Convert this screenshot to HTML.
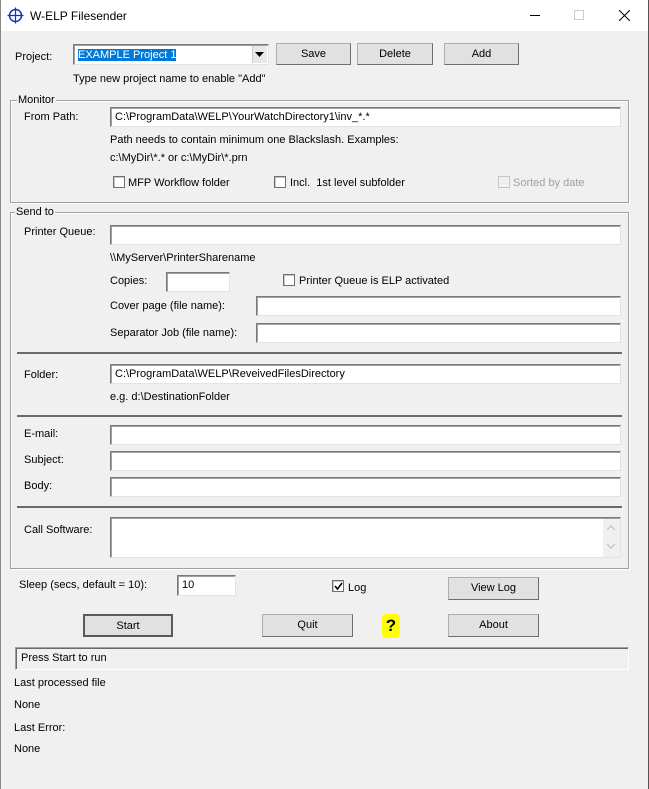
<!DOCTYPE html>
<html><head><meta charset="utf-8"><style>
*{box-sizing:border-box;margin:0;padding:0}
body{width:649px;height:789px;background:#f0f0f0;font-family:"Liberation Sans",sans-serif;font-size:11px;color:#000;position:relative;overflow:hidden}
.a{position:absolute;white-space:nowrap}
.t{position:absolute;white-space:nowrap;line-height:13px;margin-top:1px}
.in{position:absolute;background:#fff;border:1px solid #7a7a7a;border-right-color:#e3e3e3;border-bottom-color:#e3e3e3;box-shadow:inset 1px 1px 0 #a0a0a0;padding:3px 4px 2px;line-height:13px}
.btn{position:absolute;background:#e1e1e1;border:1px solid #adadad;border-right-color:#6e6e6e;border-bottom-color:#6e6e6e;text-align:center;line-height:21px}
.grp{position:absolute;border:1px solid #a0a0a0;box-shadow:1px 1px 0 #fff inset,1px 1px 0 #fff}
.gl{position:absolute;background:#f0f0f0;padding:0 1px;line-height:13px}
.cb{position:absolute;width:12px;height:12px;border:1px solid #6f6f6f;background:#fff;box-shadow:inset 1px 1px 0 #c8c8c8}
.hr{position:absolute;left:17px;width:605px;height:2px;background:#6a6a6a}
</style></head><body>
<div class="a" style="left:0;top:0;width:649px;height:31px;background:#fff"></div>
<div class="a" style="left:648px;top:0;width:1px;height:789px;background:#555"></div>
<div class="a" style="left:0;top:0;width:1px;height:789px;background:#888"></div>
<svg class="a" style="left:7px;top:7px" width="17" height="17" viewBox="0 0 17 17"><circle cx="8.5" cy="8.5" r="6" fill="none" stroke="#1a2ad8" stroke-width="1.5"/><path d="M8.5 0.5V16.5M0.5 8.5H16.5" stroke="#1a2ad8" stroke-width="1.2"/></svg>
<div class="t" style="left:30px;top:9px;font-size:12px">W-ELP Filesender</div>
<div class="a" style="left:530px;top:15px;width:10px;height:1px;background:#000"></div>
<div class="a" style="left:574px;top:10px;width:10px;height:10px;border:1px solid #ccc"></div>
<svg class="a" style="left:619px;top:10px" width="11" height="11"><path d="M0 0L11 11M11 0L0 11" stroke="#000" stroke-width="1"/></svg>

<div class="t" style="left:15px;top:50px">Project:</div>
<div class="in" style="left:73px;top:44px;width:196px;height:21px;padding:3px 4px"><span style="background:#0078d7;color:#fff;line-height:14px">EXAMPLE Project 1</span></div>
<div class="a" style="left:252px;top:46px;width:15px;height:17px;background:#e8e8e8;border-left:1px solid #ccc"></div>
<svg class="a" style="left:255px;top:52px" width="9" height="5"><path d="M0 0H9L4.5 5Z" fill="#000"/></svg>
<div class="btn" style="left:276px;top:43px;width:75px;height:22px">Save</div>
<div class="btn" style="left:357px;top:43px;width:76px;height:22px">Delete</div>
<div class="btn" style="left:444px;top:43px;width:75px;height:22px">Add</div>
<div class="t" style="left:73px;top:72px">Type new project name to enable "Add"</div>

<div class="grp" style="left:10px;top:100px;width:619px;height:103px"></div>
<div class="gl" style="left:17px;top:94px">Monitor</div>
<div class="t" style="left:24px;top:110px">From Path:</div>
<div class="in" style="left:110px;top:107px;width:511px;height:20px">C:\ProgramData\WELP\YourWatchDirectory1\inv_*.*</div>
<div class="t" style="left:110px;top:133px">Path needs to contain minimum one Blackslash. Examples:</div>
<div class="t" style="left:110px;top:151px">c:\MyDir\*.* or c:\MyDir\*.prn</div>
<div class="cb" style="left:113px;top:176px"></div>
<div class="t" style="left:128px;top:176px">MFP Workflow folder</div>
<div class="cb" style="left:274px;top:176px"></div>
<div class="t" style="left:290px;top:176px">Incl.&nbsp; 1st level subfolder</div>
<div class="cb" style="left:498px;top:176px;border-color:#c8c8c8;background:#f0f0f0;box-shadow:none"></div>
<div class="t" style="left:513px;top:176px;color:#a0a0a0">Sorted by date</div>

<div class="grp" style="left:10px;top:212px;width:619px;height:357px"></div>
<div class="gl" style="left:15px;top:206px">Send to</div>
<div class="t" style="left:24px;top:225px">Printer Queue:</div>
<div class="in" style="left:110px;top:225px;width:511px;height:20px"></div>
<div class="t" style="left:110px;top:251px">\\MyServer\PrinterSharename</div>
<div class="t" style="left:110px;top:274px">Copies:</div>
<div class="in" style="left:166px;top:272px;width:64px;height:20px"></div>
<div class="cb" style="left:283px;top:274px"></div>
<div class="t" style="left:299px;top:274px">Printer Queue is ELP activated</div>
<div class="t" style="left:110px;top:299px">Cover page (file name):</div>
<div class="in" style="left:256px;top:296px;width:365px;height:20px"></div>
<div class="t" style="left:110px;top:326px">Separator Job (file name):</div>
<div class="in" style="left:256px;top:323px;width:365px;height:20px"></div>
<div class="hr" style="top:352px"></div>
<div class="t" style="left:24px;top:368px">Folder:</div>
<div class="in" style="left:110px;top:364px;width:511px;height:20px">C:\ProgramData\WELP\ReveivedFilesDirectory</div>
<div class="t" style="left:110px;top:390px">e.g. d:\DestinationFolder</div>
<div class="hr" style="top:415px"></div>
<div class="t" style="left:24px;top:427px">E-mail:</div>
<div class="in" style="left:110px;top:425px;width:511px;height:20px"></div>
<div class="t" style="left:24px;top:453px">Subject:</div>
<div class="in" style="left:110px;top:451px;width:511px;height:20px"></div>
<div class="t" style="left:24px;top:479px">Body:</div>
<div class="in" style="left:110px;top:477px;width:511px;height:20px"></div>
<div class="hr" style="top:506px"></div>
<div class="t" style="left:24px;top:523px">Call Software:</div>
<div class="in" style="left:110px;top:517px;width:511px;height:41px"></div>
<div class="a" style="left:603px;top:519px;width:17px;height:38px;background:#f0f0f0"></div>
<svg class="a" style="left:606px;top:543px" width="10" height="6"><path d="M1 1L5 5L9 1" fill="none" stroke="#c0c0c0" stroke-width="1.2"/></svg>
<svg class="a" style="left:606px;top:525px" width="10" height="6"><path d="M1 5L5 1L9 5" fill="none" stroke="#c0c0c0" stroke-width="1.2"/></svg>

<div class="t" style="left:19px;top:578px">Sleep (secs, default = 10):</div>
<div class="in" style="left:177px;top:575px;width:59px;height:21px">10</div>
<div class="cb" style="left:332px;top:580px"></div>
<svg class="a" style="left:334px;top:582px" width="9" height="9"><path d="M1 4L3.5 7L8 1" fill="none" stroke="#000" stroke-width="1.6"/></svg>
<div class="t" style="left:348px;top:581px">Log</div>
<div class="btn" style="left:448px;top:577px;width:91px;height:23px">View Log</div>

<div class="btn" style="left:83px;top:614px;width:90px;height:23px;border:2px solid #5a5a5a;line-height:20px">Start</div>
<div class="btn" style="left:262px;top:614px;width:91px;height:23px">Quit</div>
<div class="a" style="left:382px;top:614px;width:18px;height:24px;background:#ffff00;border-radius:4px;font-weight:bold;font-size:17px;text-align:center;line-height:24px">?</div>
<div class="btn" style="left:448px;top:614px;width:91px;height:23px">About</div>

<div class="a" style="left:15px;top:647px;width:614px;height:23px;border:1px solid #a0a0a0;border-right-color:#fff;border-bottom-color:#fff;box-shadow:inset 1px 1px 0 #696969;padding:4px 5px;line-height:13px">Press Start to run</div>
<div class="t" style="left:14px;top:676px">Last processed file</div>
<div class="t" style="left:14px;top:698px">None</div>
<div class="t" style="left:14px;top:721px">Last Error:</div>
<div class="t" style="left:14px;top:742px">None</div>
</body></html>
